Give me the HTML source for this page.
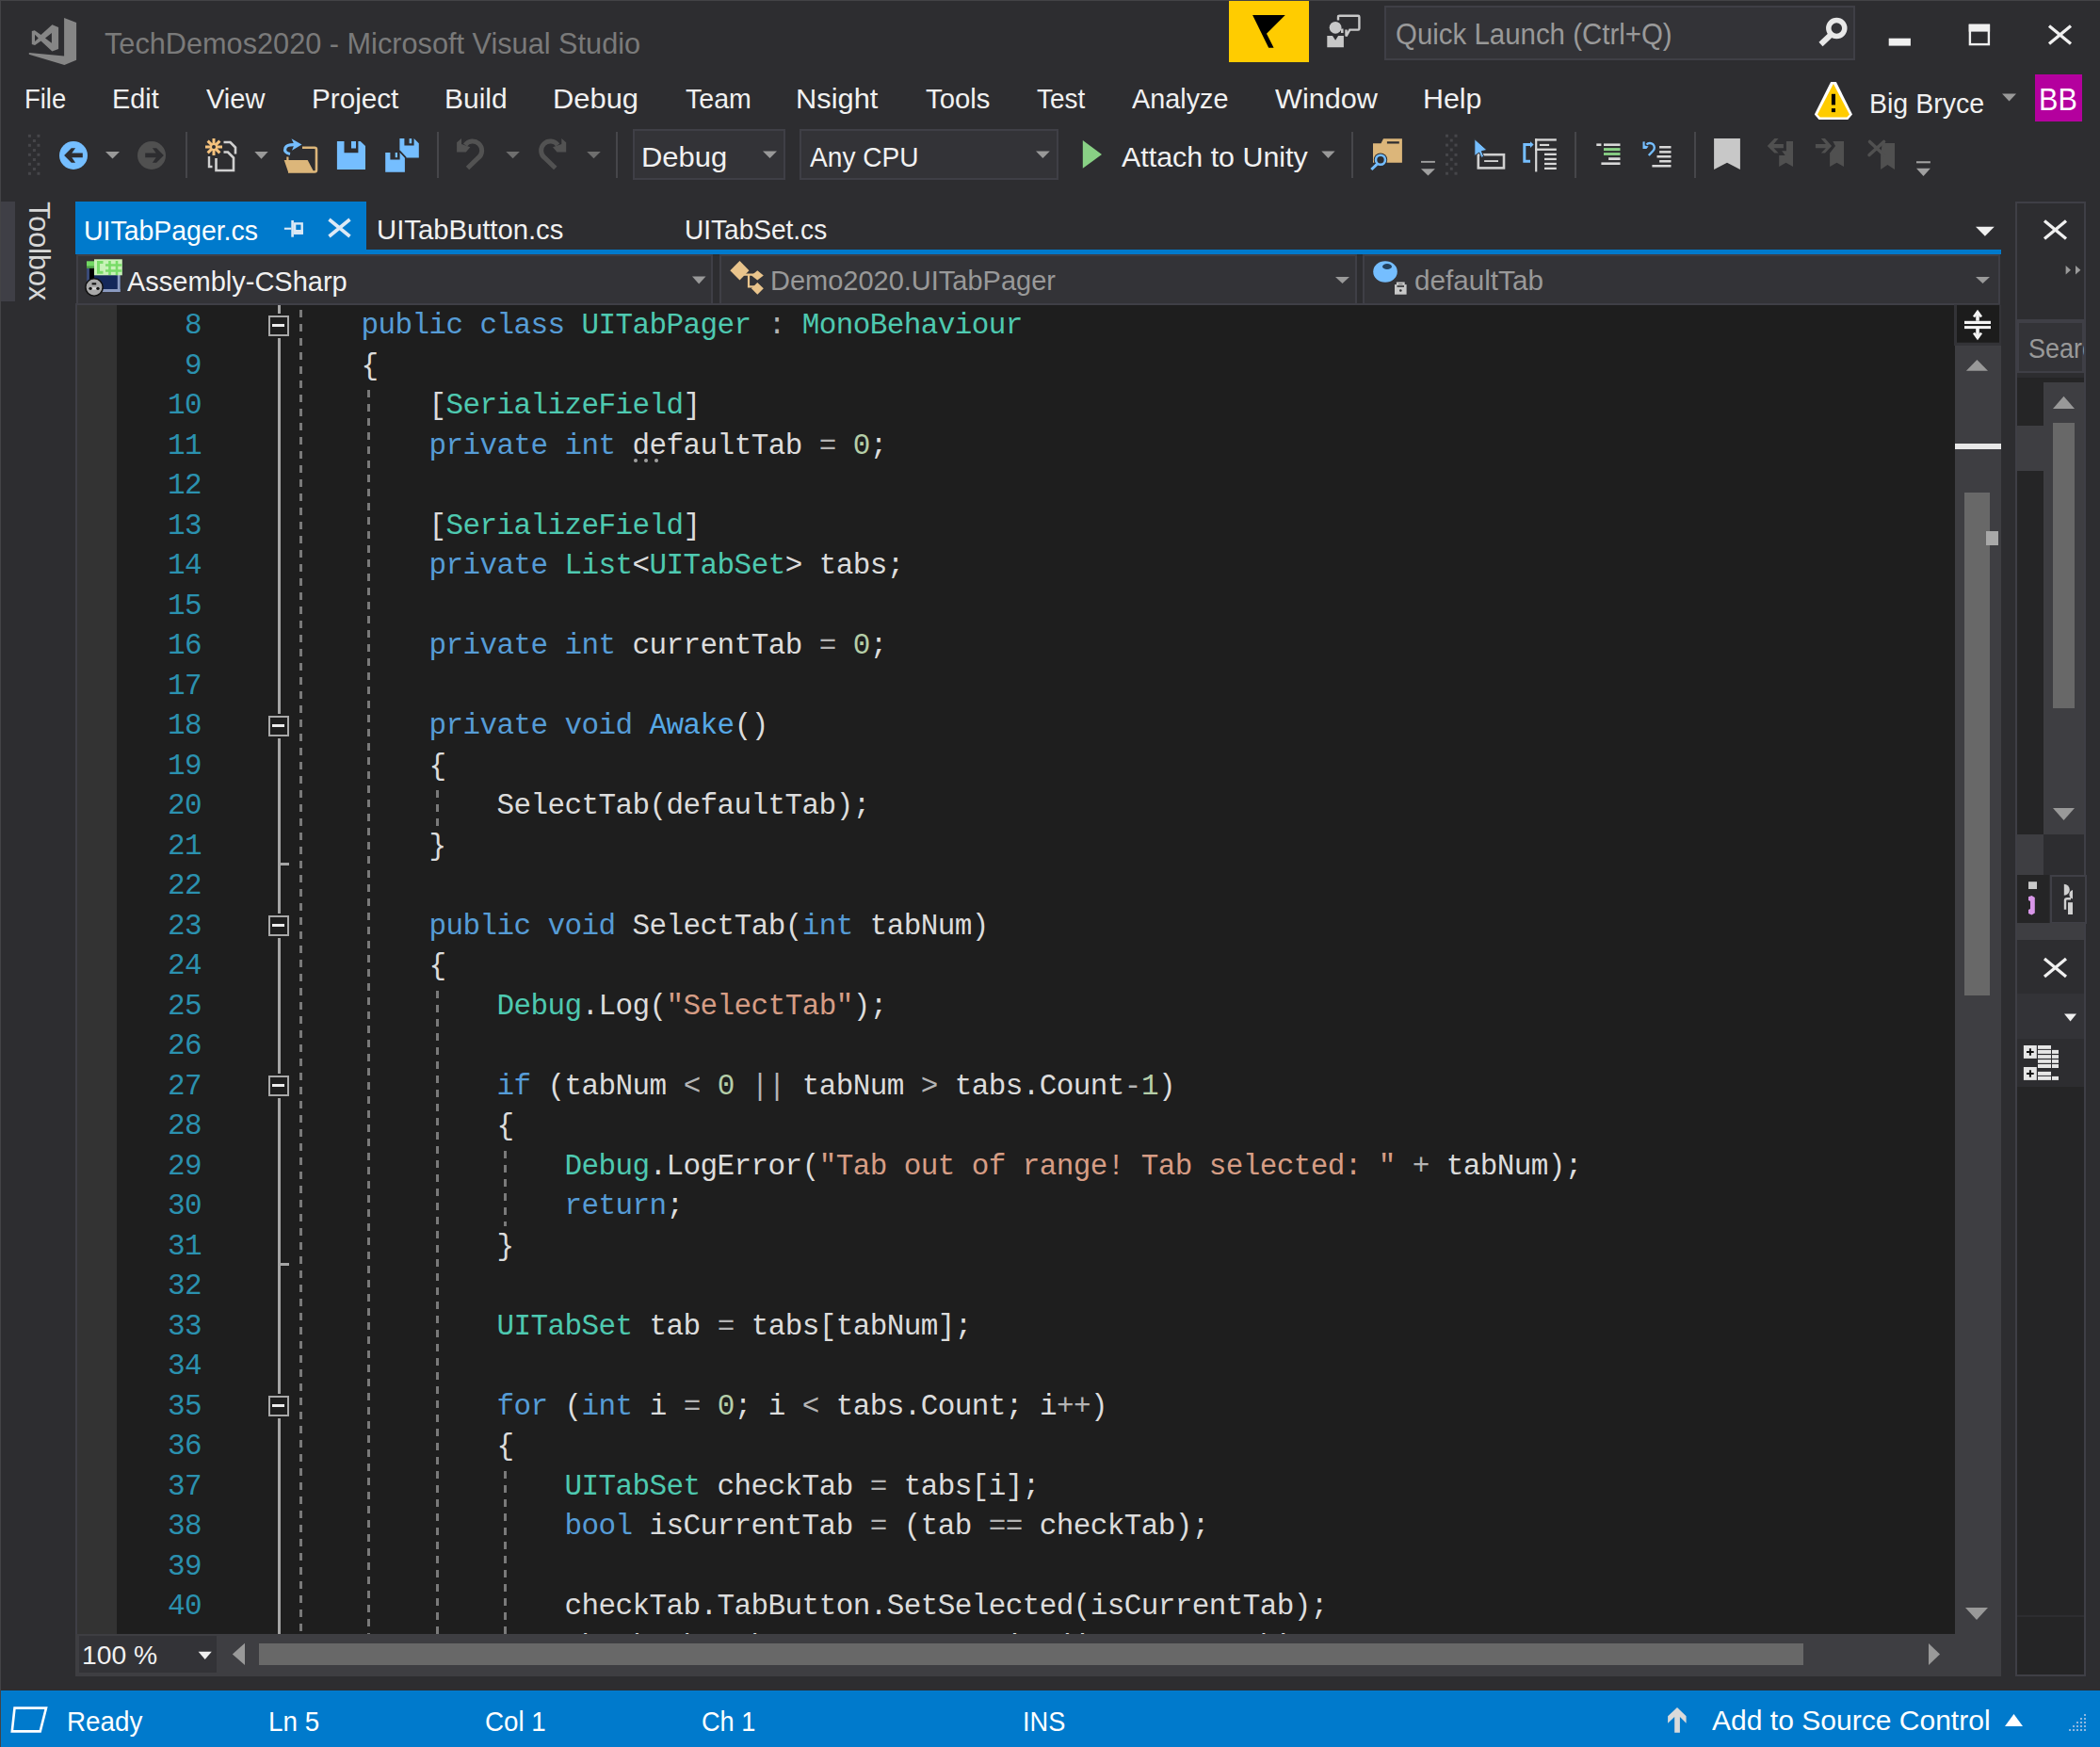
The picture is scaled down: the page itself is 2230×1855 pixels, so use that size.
<!DOCTYPE html>
<html><head><meta charset="utf-8"><style>
html,body{margin:0;padding:0;}
body{width:2230px;height:1855px;background:#2d2d30;position:relative;overflow:hidden;font-family:"Liberation Sans",sans-serif;}
.t{position:absolute;white-space:pre;transform-origin:0 0;font-family:"Liberation Sans",sans-serif;}
.c{position:absolute;white-space:pre;font-family:"Liberation Mono",monospace;font-size:31px;line-height:31px;letter-spacing:-0.6px;}
</style></head><body>
<div style="position:absolute;left:0px;top:0px;width:2230px;height:1px;background:#434346;"></div><div style="position:absolute;left:0px;top:0px;width:1px;height:1855px;background:#434346;"></div><div style="position:absolute;left:1305px;top:1px;width:85px;height:65px;background:#ffcc00;"></div><div style="position:absolute;left:1470px;top:6px;width:496px;height:54px;background:#333337;border:2px solid #3f3f46;"></div><div style="position:absolute;left:2161px;top:79px;width:50px;height:50px;background:#b4009e;"></div><div style="position:absolute;left:672px;top:137px;width:158px;height:50px;background:#333337;border:2px solid #3f3f46;"></div><div style="position:absolute;left:849px;top:137px;width:271px;height:50px;background:#333337;border:2px solid #3f3f46;"></div><div style="position:absolute;left:197px;top:140px;width:2px;height:49px;background:#46464a;"></div><div style="position:absolute;left:464px;top:140px;width:2px;height:49px;background:#46464a;"></div><div style="position:absolute;left:654px;top:140px;width:2px;height:49px;background:#46464a;"></div><div style="position:absolute;left:1435px;top:140px;width:2px;height:49px;background:#46464a;"></div><div style="position:absolute;left:1672px;top:140px;width:2px;height:49px;background:#46464a;"></div><div style="position:absolute;left:1799px;top:140px;width:2px;height:49px;background:#46464a;"></div><div style="position:absolute;left:1px;top:214px;width:15px;height:106px;background:#3f3f46;"></div><div style="position:absolute;left:80px;top:214px;width:309px;height:56px;background:#007acc;"></div><div style="position:absolute;left:80px;top:265px;width:2045px;height:5px;background:#007acc;"></div><div style="position:absolute;left:81px;top:270px;width:672px;height:50px;background:#333337;border:2px solid #3f3f46;"></div><div style="position:absolute;left:764px;top:270px;width:673px;height:50px;background:#333337;border:2px solid #3f3f46;"></div><div style="position:absolute;left:1447px;top:270px;width:673px;height:50px;background:#333337;border:2px solid #3f3f46;"></div><div style="position:absolute;left:80px;top:322px;width:1996px;height:1413px;background:#3f3f46;"></div><div style="position:absolute;left:82px;top:324px;width:1994px;height:1411px;background:#1e1e1e;"></div><div style="position:absolute;left:82px;top:324px;width:42px;height:1411px;background:#333333;"></div><div style="position:absolute;left:2076px;top:324px;width:49px;height:1411px;background:#3e3e42;"></div><div style="position:absolute;left:2076px;top:324px;width:48px;height:40px;background:#1e1e1e;"></div><div style="position:absolute;left:2076px;top:471px;width:49px;height:6px;background:#e8e8e8;"></div><div style="position:absolute;left:2086px;top:523px;width:27px;height:534px;background:#686868;"></div><div style="position:absolute;left:2109px;top:564px;width:13px;height:15px;background:#a8a8a8;"></div><div style="position:absolute;left:80px;top:1735px;width:2045px;height:45px;background:#3e3e42;"></div><div style="position:absolute;left:84px;top:1737px;width:146px;height:39px;background:#333337;"></div><div style="position:absolute;left:275px;top:1745px;width:1640px;height:23px;background:#686868;"></div><div style="position:absolute;left:1px;top:1795px;width:2229px;height:60px;background:#007acc;"></div><div style="position:absolute;left:2140px;top:214px;width:71px;height:1562px;background:#2d2d30;border:2px solid #3f3f46;"></div><div style="position:absolute;left:2142px;top:339px;width:71px;height:3px;background:#3f3f46;"></div><div style="position:absolute;left:2142px;top:341px;width:67px;height:51px;background:#333337;border:2px solid #3f3f46;"></div><div style="position:absolute;left:2142px;top:401px;width:71px;height:5px;background:#252526;"></div><div style="position:absolute;left:2142px;top:406px;width:28px;height:46px;background:#252526;"></div><div style="position:absolute;left:2142px;top:452px;width:28px;height:48px;background:#3e3e42;"></div><div style="position:absolute;left:2142px;top:500px;width:28px;height:386px;background:#252526;"></div><div style="position:absolute;left:2170px;top:406px;width:43px;height:480px;background:#3e3e42;"></div><div style="position:absolute;left:2180px;top:449px;width:23px;height:303px;background:#686868;"></div><div style="position:absolute;left:2142px;top:886px;width:28px;height:43px;background:#3e3e42;"></div><div style="position:absolute;left:2142px;top:929px;width:34px;height:51px;background:#252526;"></div><div style="position:absolute;left:2177px;top:929px;width:35px;height:48px;background:#2d2d30;border:2px solid #3f3f46;"></div><div style="position:absolute;left:2142px;top:980px;width:71px;height:18px;background:#3e3e42;"></div><div style="position:absolute;left:2142px;top:1055px;width:71px;height:48px;background:#333337;"></div><div style="position:absolute;left:2142px;top:1154px;width:71px;height:624px;background:#252526;"></div><div style="position:absolute;left:2142px;top:1715px;width:71px;height:2px;background:#2d2d30;"></div><div style="position:absolute;left:124px;top:324px;width:1952px;height:1411px;overflow:hidden"><div style="position:absolute;left:194.0px;top:0.0px;width:3px;height:1445.0px;background:repeating-linear-gradient(to bottom,transparent 0px,transparent 4.9px,#7a7a7a 4.9px,#7a7a7a 12.6px,transparent 12.6px,transparent 15px)"></div><div style="position:absolute;left:266.0px;top:85.0px;width:3px;height:1360.0px;background:repeating-linear-gradient(to bottom,transparent 0px,transparent 4.9px,#7a7a7a 4.9px,#7a7a7a 12.6px,transparent 12.6px,transparent 15px)"></div><div style="position:absolute;left:339.0px;top:510.0px;width:3px;height:42.5px;background:repeating-linear-gradient(to bottom,transparent 0px,transparent 4.9px,#7a7a7a 4.9px,#7a7a7a 12.6px,transparent 12.6px,transparent 15px)"></div><div style="position:absolute;left:339.0px;top:722.5px;width:3px;height:722.5px;background:repeating-linear-gradient(to bottom,transparent 0px,transparent 4.9px,#7a7a7a 4.9px,#7a7a7a 12.6px,transparent 12.6px,transparent 15px)"></div><div style="position:absolute;left:411.0px;top:892.5px;width:3px;height:85.0px;background:repeating-linear-gradient(to bottom,transparent 0px,transparent 4.9px,#7a7a7a 4.9px,#7a7a7a 12.6px,transparent 12.6px,transparent 15px)"></div><div style="position:absolute;left:411.0px;top:1232.5px;width:3px;height:212.5px;background:repeating-linear-gradient(to bottom,transparent 0px,transparent 4.9px,#7a7a7a 4.9px,#7a7a7a 12.6px,transparent 12.6px,transparent 15px)"></div><div style="position:absolute;left:171px;top:0px;width:3px;height:1411px;background:#a5a5a5"></div><div style="position:absolute;left:174px;top:592.0px;width:9px;height:3px;background:#a5a5a5"></div><div style="position:absolute;left:174px;top:1017.0px;width:9px;height:3px;background:#a5a5a5"></div><div style="position:absolute;left:161px;top:10.50px;width:18px;height:18px;border:2px solid #a8a8a8;background:#1e1e1e;box-shadow:0 0 0 2px #1e1e1e"><div style="position:absolute;left:2.3px;top:7.4px;width:12.8px;height:2.8px;background:#ececec"></div></div><div style="position:absolute;left:161px;top:435.50px;width:18px;height:18px;border:2px solid #a8a8a8;background:#1e1e1e;box-shadow:0 0 0 2px #1e1e1e"><div style="position:absolute;left:2.3px;top:7.4px;width:12.8px;height:2.8px;background:#ececec"></div></div><div style="position:absolute;left:161px;top:648.00px;width:18px;height:18px;border:2px solid #a8a8a8;background:#1e1e1e;box-shadow:0 0 0 2px #1e1e1e"><div style="position:absolute;left:2.3px;top:7.4px;width:12.8px;height:2.8px;background:#ececec"></div></div><div style="position:absolute;left:161px;top:818.00px;width:18px;height:18px;border:2px solid #a8a8a8;background:#1e1e1e;box-shadow:0 0 0 2px #1e1e1e"><div style="position:absolute;left:2.3px;top:7.4px;width:12.8px;height:2.8px;background:#ececec"></div></div><div style="position:absolute;left:161px;top:1158.00px;width:18px;height:18px;border:2px solid #a8a8a8;background:#1e1e1e;box-shadow:0 0 0 2px #1e1e1e"><div style="position:absolute;left:2.3px;top:7.4px;width:12.8px;height:2.8px;background:#ececec"></div></div><div class="c" style="left:72.0px;top:6.13px;color:#2b91af">8</div><div class="c" style="left:187.5px;top:6.13px;color:#dcdcdc">    <span style="color:#569cd6">public</span> <span style="color:#569cd6">class</span> <span style="color:#4ec9b0">UITabPager</span> <span style="color:#b4b4b4">:</span> <span style="color:#4ec9b0">MonoBehaviour</span></div><div class="c" style="left:72.0px;top:48.63px;color:#2b91af">9</div><div class="c" style="left:187.5px;top:48.63px;color:#dcdcdc">    <span style="color:#dcdcdc">{</span></div><div class="c" style="left:54.0px;top:91.13px;color:#2b91af">10</div><div class="c" style="left:187.5px;top:91.13px;color:#dcdcdc">        <span style="color:#dcdcdc">[</span><span style="color:#4ec9b0">SerializeField</span><span style="color:#dcdcdc">]</span></div><div class="c" style="left:54.0px;top:133.63px;color:#2b91af">11</div><div class="c" style="left:187.5px;top:133.63px;color:#dcdcdc">        <span style="color:#569cd6">private</span> <span style="color:#569cd6">int</span> <span style="color:#dcdcdc">defaultTab</span> <span style="color:#b4b4b4">=</span> <span style="color:#b5cea8">0</span><span style="color:#dcdcdc">;</span></div><div class="c" style="left:54.0px;top:176.13px;color:#2b91af">12</div><div class="c" style="left:187.5px;top:176.13px;color:#dcdcdc"></div><div class="c" style="left:54.0px;top:218.63px;color:#2b91af">13</div><div class="c" style="left:187.5px;top:218.63px;color:#dcdcdc">        <span style="color:#dcdcdc">[</span><span style="color:#4ec9b0">SerializeField</span><span style="color:#dcdcdc">]</span></div><div class="c" style="left:54.0px;top:261.13px;color:#2b91af">14</div><div class="c" style="left:187.5px;top:261.13px;color:#dcdcdc">        <span style="color:#569cd6">private</span> <span style="color:#4ec9b0">List</span><span style="color:#dcdcdc">&lt;</span><span style="color:#4ec9b0">UITabSet</span><span style="color:#dcdcdc">&gt;</span> <span style="color:#dcdcdc">tabs</span><span style="color:#dcdcdc">;</span></div><div class="c" style="left:54.0px;top:303.63px;color:#2b91af">15</div><div class="c" style="left:187.5px;top:303.63px;color:#dcdcdc"></div><div class="c" style="left:54.0px;top:346.13px;color:#2b91af">16</div><div class="c" style="left:187.5px;top:346.13px;color:#dcdcdc">        <span style="color:#569cd6">private</span> <span style="color:#569cd6">int</span> <span style="color:#dcdcdc">currentTab</span> <span style="color:#b4b4b4">=</span> <span style="color:#b5cea8">0</span><span style="color:#dcdcdc">;</span></div><div class="c" style="left:54.0px;top:388.63px;color:#2b91af">17</div><div class="c" style="left:187.5px;top:388.63px;color:#dcdcdc"></div><div class="c" style="left:54.0px;top:431.13px;color:#2b91af">18</div><div class="c" style="left:187.5px;top:431.13px;color:#dcdcdc">        <span style="color:#569cd6">private</span> <span style="color:#569cd6">void</span> <span style="color:#56a8e6">Awake</span><span style="color:#dcdcdc">(</span><span style="color:#dcdcdc">)</span></div><div class="c" style="left:54.0px;top:473.63px;color:#2b91af">19</div><div class="c" style="left:187.5px;top:473.63px;color:#dcdcdc">        <span style="color:#dcdcdc">{</span></div><div class="c" style="left:54.0px;top:516.13px;color:#2b91af">20</div><div class="c" style="left:187.5px;top:516.13px;color:#dcdcdc">            <span style="color:#dcdcdc">SelectTab</span><span style="color:#dcdcdc">(</span><span style="color:#dcdcdc">defaultTab</span><span style="color:#dcdcdc">)</span><span style="color:#dcdcdc">;</span></div><div class="c" style="left:54.0px;top:558.63px;color:#2b91af">21</div><div class="c" style="left:187.5px;top:558.63px;color:#dcdcdc">        <span style="color:#dcdcdc">}</span></div><div class="c" style="left:54.0px;top:601.13px;color:#2b91af">22</div><div class="c" style="left:187.5px;top:601.13px;color:#dcdcdc"></div><div class="c" style="left:54.0px;top:643.63px;color:#2b91af">23</div><div class="c" style="left:187.5px;top:643.63px;color:#dcdcdc">        <span style="color:#569cd6">public</span> <span style="color:#569cd6">void</span> <span style="color:#dcdcdc">SelectTab</span><span style="color:#dcdcdc">(</span><span style="color:#569cd6">int</span> <span style="color:#dcdcdc">tabNum</span><span style="color:#dcdcdc">)</span></div><div class="c" style="left:54.0px;top:686.13px;color:#2b91af">24</div><div class="c" style="left:187.5px;top:686.13px;color:#dcdcdc">        <span style="color:#dcdcdc">{</span></div><div class="c" style="left:54.0px;top:728.63px;color:#2b91af">25</div><div class="c" style="left:187.5px;top:728.63px;color:#dcdcdc">            <span style="color:#4ec9b0">Debug</span><span style="color:#dcdcdc">.</span><span style="color:#dcdcdc">Log</span><span style="color:#dcdcdc">(</span><span style="color:#d69d85">&quot;SelectTab&quot;</span><span style="color:#dcdcdc">)</span><span style="color:#dcdcdc">;</span></div><div class="c" style="left:54.0px;top:771.13px;color:#2b91af">26</div><div class="c" style="left:187.5px;top:771.13px;color:#dcdcdc"></div><div class="c" style="left:54.0px;top:813.63px;color:#2b91af">27</div><div class="c" style="left:187.5px;top:813.63px;color:#dcdcdc">            <span style="color:#569cd6">if</span> <span style="color:#dcdcdc">(</span><span style="color:#dcdcdc">tabNum</span> <span style="color:#b4b4b4">&lt;</span> <span style="color:#b5cea8">0</span> <span style="color:#b4b4b4">||</span> <span style="color:#dcdcdc">tabNum</span> <span style="color:#b4b4b4">&gt;</span> <span style="color:#dcdcdc">tabs</span><span style="color:#dcdcdc">.</span><span style="color:#dcdcdc">Count</span><span style="color:#b4b4b4">-</span><span style="color:#b5cea8">1</span><span style="color:#dcdcdc">)</span></div><div class="c" style="left:54.0px;top:856.13px;color:#2b91af">28</div><div class="c" style="left:187.5px;top:856.13px;color:#dcdcdc">            <span style="color:#dcdcdc">{</span></div><div class="c" style="left:54.0px;top:898.63px;color:#2b91af">29</div><div class="c" style="left:187.5px;top:898.63px;color:#dcdcdc">                <span style="color:#4ec9b0">Debug</span><span style="color:#dcdcdc">.</span><span style="color:#dcdcdc">LogError</span><span style="color:#dcdcdc">(</span><span style="color:#d69d85">&quot;Tab out of range! Tab selected: &quot;</span> <span style="color:#b4b4b4">+</span> <span style="color:#dcdcdc">tabNum</span><span style="color:#dcdcdc">)</span><span style="color:#dcdcdc">;</span></div><div class="c" style="left:54.0px;top:941.13px;color:#2b91af">30</div><div class="c" style="left:187.5px;top:941.13px;color:#dcdcdc">                <span style="color:#569cd6">return</span><span style="color:#dcdcdc">;</span></div><div class="c" style="left:54.0px;top:983.63px;color:#2b91af">31</div><div class="c" style="left:187.5px;top:983.63px;color:#dcdcdc">            <span style="color:#dcdcdc">}</span></div><div class="c" style="left:54.0px;top:1026.13px;color:#2b91af">32</div><div class="c" style="left:187.5px;top:1026.13px;color:#dcdcdc"></div><div class="c" style="left:54.0px;top:1068.63px;color:#2b91af">33</div><div class="c" style="left:187.5px;top:1068.63px;color:#dcdcdc">            <span style="color:#4ec9b0">UITabSet</span> <span style="color:#dcdcdc">tab</span> <span style="color:#b4b4b4">=</span> <span style="color:#dcdcdc">tabs</span><span style="color:#dcdcdc">[</span><span style="color:#dcdcdc">tabNum</span><span style="color:#dcdcdc">]</span><span style="color:#dcdcdc">;</span></div><div class="c" style="left:54.0px;top:1111.13px;color:#2b91af">34</div><div class="c" style="left:187.5px;top:1111.13px;color:#dcdcdc"></div><div class="c" style="left:54.0px;top:1153.63px;color:#2b91af">35</div><div class="c" style="left:187.5px;top:1153.63px;color:#dcdcdc">            <span style="color:#569cd6">for</span> <span style="color:#dcdcdc">(</span><span style="color:#569cd6">int</span> <span style="color:#dcdcdc">i</span> <span style="color:#b4b4b4">=</span> <span style="color:#b5cea8">0</span><span style="color:#dcdcdc">;</span> <span style="color:#dcdcdc">i</span> <span style="color:#b4b4b4">&lt;</span> <span style="color:#dcdcdc">tabs</span><span style="color:#dcdcdc">.</span><span style="color:#dcdcdc">Count</span><span style="color:#dcdcdc">;</span> <span style="color:#dcdcdc">i</span><span style="color:#b4b4b4">++</span><span style="color:#dcdcdc">)</span></div><div class="c" style="left:54.0px;top:1196.13px;color:#2b91af">36</div><div class="c" style="left:187.5px;top:1196.13px;color:#dcdcdc">            <span style="color:#dcdcdc">{</span></div><div class="c" style="left:54.0px;top:1238.63px;color:#2b91af">37</div><div class="c" style="left:187.5px;top:1238.63px;color:#dcdcdc">                <span style="color:#4ec9b0">UITabSet</span> <span style="color:#dcdcdc">checkTab</span> <span style="color:#b4b4b4">=</span> <span style="color:#dcdcdc">tabs</span><span style="color:#dcdcdc">[</span><span style="color:#dcdcdc">i</span><span style="color:#dcdcdc">]</span><span style="color:#dcdcdc">;</span></div><div class="c" style="left:54.0px;top:1281.13px;color:#2b91af">38</div><div class="c" style="left:187.5px;top:1281.13px;color:#dcdcdc">                <span style="color:#569cd6">bool</span> <span style="color:#dcdcdc">isCurrentTab</span> <span style="color:#b4b4b4">=</span> <span style="color:#dcdcdc">(</span><span style="color:#dcdcdc">tab</span> <span style="color:#b4b4b4">==</span> <span style="color:#dcdcdc">checkTab</span><span style="color:#dcdcdc">)</span><span style="color:#dcdcdc">;</span></div><div class="c" style="left:54.0px;top:1323.63px;color:#2b91af">39</div><div class="c" style="left:187.5px;top:1323.63px;color:#dcdcdc"></div><div class="c" style="left:54.0px;top:1366.13px;color:#2b91af">40</div><div class="c" style="left:187.5px;top:1366.13px;color:#dcdcdc">                <span style="color:#dcdcdc">checkTab</span><span style="color:#dcdcdc">.</span><span style="color:#dcdcdc">TabButton</span><span style="color:#dcdcdc">.</span><span style="color:#dcdcdc">SetSelected</span><span style="color:#dcdcdc">(</span><span style="color:#dcdcdc">isCurrentTab</span><span style="color:#dcdcdc">)</span><span style="color:#dcdcdc">;</span></div><div class="c" style="left:187.5px;top:1408.63px;color:#dcdcdc">                <span style="color:#dcdcdc">checkTab</span><span style="color:#dcdcdc">.</span><span style="color:#dcdcdc">TabContent</span><span style="color:#dcdcdc">.</span><span style="color:#dcdcdc">SetActive</span><span style="color:#dcdcdc">(</span><span style="color:#dcdcdc">isCurrentTab</span><span style="color:#dcdcdc">)</span><span style="color:#dcdcdc">;</span></div><div style="position:absolute;left:549.2px;top:163.3px;width:4px;height:4px;border-radius:2px;background:#a0a0a0"></div><div style="position:absolute;left:560.3px;top:163.3px;width:4px;height:4px;border-radius:2px;background:#a0a0a0"></div><div style="position:absolute;left:571.4px;top:163.3px;width:4px;height:4px;border-radius:2px;background:#a0a0a0"></div></div><svg style="position:absolute;left:0;top:0" width="2230" height="1855" viewBox="0 0 2230 1855"><polygon points="68.1,18.9 81.1,24.1 81.1,63.8 68.4,69.1 30.8,57.8 30.8,56.0 68.1,59.6" fill="#868686" /><path fill="#868686" fill-rule="evenodd" d="M33.8,33 L36.8,32.3 L43.5,37 L55.4,26.2 L62.1,28.9 L62.1,51.9 L55.4,54.5 L43.5,43.5 L37,48.1 L33.8,47.1 Z M37,36.8 L40.8,40.4 L37,44 Z M54.9,35.1 L54.9,45.7 L48,40.4 Z"/><polygon points="1330.1,16.0 1364.8,16.0 1345.0,35.8 1352.6,50.7 1347.2,50.7" fill="#000000" /><circle cx="1418.1" cy="29.3" r="6.4" fill="#c8c8c8"/><polygon points="1409.3,38.1 1415.0,38.1 1418.1,42.7 1421.1,38.1 1426.9,38.1 1426.9,50.3 1409.3,50.3" fill="#c8c8c8" /><path d="M1421,21.5 V18 Q1421,16.8 1422.5,16.8 H1442.2 Q1443.4,16.8 1443.4,18 V30.3 Q1443.4,31.6 1442.2,31.6 H1433.3 L1429.5,38.5 L1429.5,31.6" fill="none" stroke="#c8c8c8" stroke-width="2.4"/><rect x="1424" y="30.5" width="2.50" height="4.50" fill="#c8c8c8"/><circle cx="1950.3" cy="30" r="8.5" fill="none" stroke="#e8e8e8" stroke-width="5.5"/><line x1="1944.6" y1="36.5" x2="1933.5" y2="47" stroke="#e8e8e8" stroke-width="6"/><rect x="2005.7" y="40.7" width="23.20" height="7.90" fill="#f0f0f0"/><rect x="2091.9" y="26.9" width="20" height="20.2" fill="none" stroke="#f0f0f0" stroke-width="2.4"/><rect x="2090.7" y="25.7" width="22.40" height="7.90" fill="#f0f0f0"/><path d="M2176,27.5 L2199,46.5 M2199,27.5 L2176,46.5" stroke="#f0f0f0" stroke-width="3.3"/><polygon points="1944.1,87.0 1949.9,87.0 1967.0,121.5 1962.3,127.0 1931.5,127.0 1926.8,121.5" fill="#ffffff" /><polygon points="1946.9,88.9 1964.0,121.4 1961.2,124.5 1932.8,124.5 1930.0,121.4" fill="#ffcc00" /><rect x="1944.9" y="99.8" width="4.10" height="11.60" fill="#000000"/><rect x="1944.9" y="115.1" width="4.10" height="4.00" fill="#000000"/><polygon points="2126.0,99.5 2141.0,99.5 2133.5,107.4" fill="#999999" /><rect x="29.9" y="142.8" width="3.00" height="3.00" fill="#46464a"/><rect x="29.9" y="152.8" width="3.00" height="3.00" fill="#46464a"/><rect x="29.9" y="162.8" width="3.00" height="3.00" fill="#46464a"/><rect x="29.9" y="172.8" width="3.00" height="3.00" fill="#46464a"/><rect x="29.9" y="182.8" width="3.00" height="3.00" fill="#46464a"/><rect x="34.9" y="148.0" width="3.00" height="3.00" fill="#46464a"/><rect x="34.9" y="158.0" width="3.00" height="3.00" fill="#46464a"/><rect x="34.9" y="168.0" width="3.00" height="3.00" fill="#46464a"/><rect x="34.9" y="178.0" width="3.00" height="3.00" fill="#46464a"/><rect x="39.4" y="142.8" width="3.00" height="3.00" fill="#46464a"/><rect x="39.4" y="152.8" width="3.00" height="3.00" fill="#46464a"/><rect x="39.4" y="162.8" width="3.00" height="3.00" fill="#46464a"/><rect x="39.4" y="172.8" width="3.00" height="3.00" fill="#46464a"/><rect x="39.4" y="182.8" width="3.00" height="3.00" fill="#46464a"/><circle cx="78" cy="165" r="15" fill="#75beff"/><polygon points="68.1,165.0 75.8,157.3 80.1,157.3 76.3,162.5 87.8,162.5 87.8,167.2 76.3,167.2 80.1,172.8 75.8,172.8" fill="#2d2d30" /><polygon points="112.0,161.0 127.0,161.0 119.5,168.6" fill="#999999" /><circle cx="161" cy="165" r="15" fill="#505050"/><polygon points="173.9,165.0 166.2,157.3 161.9,157.3 165.7,162.5 154.2,162.5 154.2,167.2 165.7,167.2 161.9,172.8 166.2,172.8" fill="#2d2d30" /><path d="M227,147 V165 M218,156 H236 M220.6,149.6 L233.4,162.4 M233.4,149.6 L220.6,162.4" stroke="#f5c27d" stroke-width="3"/><circle cx="227" cy="156" r="2" fill="#2d2d30"/><path d="M237.5,151 H244.5 L250,156.5 V163.5" fill="none" stroke="#d0d0d0" stroke-width="2.6"/><path d="M237.5,161.5 H242 L248,167.5 V181 H229.5 V168" fill="none" stroke="#d0d0d0" stroke-width="2.6"/><path d="M222,166 V177 H225.5" fill="none" stroke="#d0d0d0" stroke-width="2.4"/><polygon points="270.3,161.0 284.7,161.0 277.5,168.7" fill="#999999" /><path d="M321,156.8 H334 Q336,156.8 336,158.8 V180.6 Q336,182.5 334,182.5 H306" fill="none" stroke="#dcb67a" stroke-width="2.6"/><polygon points="301.7,170.0 326.7,170.0 333.3,182.6 306.0,182.6" fill="#dcb67a" /><rect x="304.3" y="166.5" width="2.20" height="3.50" fill="#dcb67a"/><path d="M308,163.5 Q301,162 303,157 Q305,153.2 314,153.8" fill="none" stroke="#75beff" stroke-width="3.2"/><polygon points="309.5,147.2 320.5,153.5 310.0,159.8 312.5,153.5" fill="#75beff" /><path fill="#75beff" fill-rule="evenodd" d="M357.9,150 H382.7 L388,154.9 V180.1 H357.9 Z M365.5,150 V162.3 H380.4 V150 Z"/><rect x="373" y="150" width="5.00" height="7.50" fill="#75beff"/><path fill="#75beff" fill-rule="evenodd" d="M424.4,147.1 H439.6 L444.8,152.3 V167.5 H431.7 L424.4,159.9 Z M429.4,147.1 V154.4 H439.6 V147.1 Z"/><rect x="434.6" y="147.1" width="2.60" height="5.20" fill="#75beff"/><path fill="#75beff" fill-rule="evenodd" d="M409.2,162 H424.9 L429.9,167.5 V182.7 H409.2 Z M414.4,162 V169.6 H424.6 V162 Z"/><rect x="419.7" y="162" width="2.30" height="5.20" fill="#75beff"/><line x1="424" y1="160" x2="431" y2="167.5" stroke="#2d2d30" stroke-width="1.8"/><path d="M496.5,178.5 L508,167.5 A9.8,9.8 0 1 0 494,154" fill="none" stroke="#525252" stroke-width="5"/><polygon points="485.1,151.3 490.0,146.9 490.0,153.0 499.3,156.2 494.8,161.5 485.1,161.5" fill="#525252" /><g transform="translate(1086.3,0) scale(-1,1)"><path d="M496.5,178.5 L508,167.5 A9.8,9.8 0 1 0 494,154" fill="none" stroke="#525252" stroke-width="5"/><polygon points="485.1,151.3 490.0,146.9 490.0,153.0 499.3,156.2 494.8,161.5 485.1,161.5" fill="#525252" /></g><polygon points="537.3,161.0 551.9,161.0 544.6,168.3" fill="#6e6e6e" /><polygon points="623.2,161.0 637.8,161.0 630.5,168.3" fill="#6e6e6e" /><polygon points="810.0,160.5 825.0,160.5 817.5,168.0" fill="#999999" /><polygon points="1100.0,160.5 1114.8,160.5 1107.4,168.0" fill="#999999" /><polygon points="1149.8,149.0 1170.0,163.9 1149.8,178.8" fill="#89d185" /><polygon points="1403.3,160.5 1417.6,160.5 1410.4,168.0" fill="#999999" /><path fill="#dcb67a" fill-rule="evenodd" d="M1458,152.2 H1466.5 L1469,147.2 H1488.9 V172.8 H1458 Z M1472.9,150.3 V152.6 H1485.8 V150.3 Z"/><circle cx="1466" cy="169.7" r="7.2" fill="#2d2d30"/><circle cx="1466" cy="169.7" r="5" fill="none" stroke="#75beff" stroke-width="2.6"/><line x1="1462.2" y1="174.3" x2="1456.3" y2="180" stroke="#75beff" stroke-width="3"/><rect x="1509" y="170.9" width="14.90" height="1.90" fill="#a0a0a0"/><polygon points="1509.0,179.2 1523.9,179.2 1516.5,186.5" fill="#a0a0a0" /><rect x="1535.0" y="142.7" width="3.00" height="3.00" fill="#46464a"/><rect x="1535.0" y="152.6" width="3.00" height="3.00" fill="#46464a"/><rect x="1535.0" y="162.9" width="3.00" height="3.00" fill="#46464a"/><rect x="1535.0" y="172.8" width="3.00" height="3.00" fill="#46464a"/><rect x="1535.0" y="182.7" width="3.00" height="3.00" fill="#46464a"/><rect x="1539.8" y="147.6" width="3.00" height="3.00" fill="#46464a"/><rect x="1539.8" y="157.5" width="3.00" height="3.00" fill="#46464a"/><rect x="1539.8" y="167.8" width="3.00" height="3.00" fill="#46464a"/><rect x="1539.8" y="177.7" width="3.00" height="3.00" fill="#46464a"/><rect x="1544.5" y="142.7" width="3.00" height="3.00" fill="#46464a"/><rect x="1544.5" y="152.6" width="3.00" height="3.00" fill="#46464a"/><rect x="1544.5" y="162.9" width="3.00" height="3.00" fill="#46464a"/><rect x="1544.5" y="172.8" width="3.00" height="3.00" fill="#46464a"/><rect x="1544.5" y="182.7" width="3.00" height="3.00" fill="#46464a"/><rect x="1569.8" y="164.2" width="27.2" height="14.2" fill="none" stroke="#d0d0d0" stroke-width="2.6"/><rect x="1576.1" y="170.1" width="14.90" height="1.90" fill="#d0d0d0"/><polygon points="1565.8,147.6 1579.1,159.4 1573.4,160.6 1575.7,166.3 1573.0,167.4 1570.8,162.1 1565.8,165.5" fill="#75beff" stroke="#2d2d30" stroke-width="1"/><path d="M1626.5,153.5 H1618.8 V171.3 H1625" fill="none" stroke="#75beff" stroke-width="3"/><polygon points="1625.0,150.3 1628.6,153.5 1625.0,157.0" fill="#75beff" /><rect x="1630.1" y="147.3" width="2.20" height="35.10" fill="#d8d8d8"/><rect x="1630" y="147.3" width="22.80" height="2.30" fill="#d8d8d8"/><rect x="1630" y="157.6" width="22.80" height="2.30" fill="#d8d8d8"/><rect x="1640" y="162.7" width="12.80" height="2.30" fill="#d8d8d8"/><rect x="1640" y="167.8" width="12.80" height="2.30" fill="#d8d8d8"/><rect x="1640" y="172.8" width="12.80" height="2.30" fill="#d8d8d8"/><rect x="1640" y="177.7" width="12.80" height="2.30" fill="#d8d8d8"/><rect x="1634.9" y="152.9" width="10.20" height="2.10" fill="#d8d8d8"/><rect x="1695.3" y="152.4" width="5.10" height="2.60" fill="#d8d8d8"/><rect x="1703" y="152.4" width="17.50" height="2.60" fill="#d8d8d8"/><rect x="1703" y="157.1" width="17.50" height="3.00" fill="#89d185"/><rect x="1703" y="162.1" width="17.50" height="2.80" fill="#89d185"/><rect x="1708.1" y="167.2" width="12.40" height="2.80" fill="#d8d8d8"/><rect x="1700.4" y="172.4" width="20.10" height="2.60" fill="#d8d8d8"/><rect x="1762.1" y="155" width="12.40" height="2.50" fill="#d8d8d8"/><rect x="1762.1" y="160.1" width="12.40" height="2.50" fill="#d8d8d8"/><rect x="1759.5" y="165" width="15.00" height="2.50" fill="#d8d8d8"/><rect x="1762.1" y="170" width="12.40" height="2.50" fill="#d8d8d8"/><rect x="1754.4" y="175" width="20.10" height="2.50" fill="#d8d8d8"/><path d="M1750.8,165 L1755.5,160 A4.6,4.6 0 1 0 1748.5,153.5" fill="none" stroke="#75beff" stroke-width="2.4"/><polygon points="1744.5,150.5 1746.6,150.3 1746.6,154.5 1750.6,155.5 1748.3,158.0 1744.5,158.0" fill="#75beff" /><polygon points="1820.1,147.1 1847.9,147.1 1847.9,179.9 1834.0,172.7 1820.1,179.9" fill="#c8c8c8" /><polygon points="1896.9,150.1 1904.0,150.1 1904.0,177.1 1896.5,172.7 1889.2,177.1 1889.2,165.0 1895.7,165.0 1892.1,160.2 1896.9,160.2" fill="#505050" /><polygon points="1876.7,154.9 1884.4,147.1 1888.6,147.1 1883.5,153.0 1893.9,153.0 1893.9,157.3 1883.5,157.3 1888.6,162.6 1884.4,162.6" fill="#505050" /><polygon points="1946.3,150.1 1958.0,150.1 1958.0,177.1 1950.5,172.7 1943.1,177.1 1943.1,162.6 1949.0,155.0" fill="#505050" /><polygon points="1945.1,154.9 1938.0,147.1 1933.8,147.1 1938.9,153.0 1927.9,153.0 1927.9,157.3 1938.9,157.3 1933.8,162.6 1938.0,162.6" fill="#505050" /><polygon points="1998.7,151.9 2012.0,151.9 2012.0,179.9 2004.4,175.1 1997.1,179.9 1997.1,165.0" fill="#505050" /><path d="M1985.5,150.5 L2000.5,164.5 M2000.5,150.5 L1985,164.5" stroke="#505050" stroke-width="3.6" stroke-linecap="round"/><rect x="2035" y="171.2" width="14.90" height="2.10" fill="#a0a0a0"/><polygon points="2035.0,178.7 2049.9,178.7 2042.5,187.0" fill="#a0a0a0" /><rect x="301.9" y="241.7" width="7.60" height="2.10" fill="#dce9f5"/><rect x="309.3" y="234" width="2.60" height="17.70" fill="#dce9f5"/><rect x="313.1" y="237.4" width="7.6" height="10.2" fill="none" stroke="#dce9f5" stroke-width="2.4"/><rect x="311.9" y="244" width="10.00" height="4.80" fill="#dce9f5"/><path d="M349.5,233 L371.5,251 M371.5,233 L349.5,251" stroke="#dce9f5" stroke-width="3.6"/><polygon points="2098.0,240.7 2117.8,240.7 2107.9,250.8" fill="#f0f0f0" /><rect x="92" y="285" width="35.60" height="25.00" fill="#14285a"/><rect x="92" y="285" width="3.00" height="15.00" fill="#3a4a78"/><rect x="95" y="285" width="5.00" height="12.00" fill="#000000"/><rect x="124.8" y="290" width="2.80" height="20.00" fill="#8a9ac0"/><rect x="100" y="307" width="27.60" height="3.00" fill="#8a9ac0"/><rect x="92" y="277.3" width="8.00" height="7.70" fill="#72d862"/><rect x="92" y="282.5" width="8.00" height="2.50" fill="#4f9a48"/><rect x="100" y="275.3" width="29.80" height="17.00" fill="#c8f2b8"/><path d="M109.5,278.5 H104.5 V289.2 H109.5" fill="none" stroke="#78dc68" stroke-width="3"/><path d="M116.5,277 V292 M124,277 V292 M112,281.5 H129.5 M112,287.5 H129.5" fill="none" stroke="#78dc68" stroke-width="2.6"/><circle cx="100" cy="305" r="9.2" fill="#a8a8a8" stroke="#111" stroke-width="1.6"/><rect x="97.6" y="300.3" width="4.60" height="2.10" fill="#111111"/><circle cx="96" cy="306.3" r="1.6" fill="#111"/><circle cx="104" cy="306.3" r="1.6" fill="#111"/><rect x="98" y="305.2" width="4.00" height="2.30" fill="#d8d8d8"/><polygon points="735.0,293.6 749.5,293.6 742.2,301.4" fill="#999999" /><polygon points="785.5,277.1 795.5,287.3 785.5,297.5 775.3,287.3" fill="#e9c48c" /><polygon points="804.3,287.3 810.8,292.4 804.3,297.5 797.9,292.4" fill="#e9c48c" /><polygon points="804.3,299.9 810.8,306.2 804.3,312.8 797.9,306.2" fill="#e9c48c" /><path d="M788,291.7 H802 M795,291.7 V304.3 H802" fill="none" stroke="#e9c48c" stroke-width="2.2"/><polygon points="1418.0,294.0 1433.0,294.0 1425.5,301.0" fill="#999999" /><ellipse cx="1471" cy="288.5" rx="12.8" ry="11.2" fill="#75beff"/><ellipse cx="1473" cy="283" rx="5" ry="3" fill="#24425e"/><rect x="1481" y="302.1" width="12.60" height="10.60" fill="#c8c8c8"/><path d="M1484,302.5 V300.5 H1490.6 V302.5" fill="none" stroke="#c8c8c8" stroke-width="2.2"/><rect x="1483.5" y="303.2" width="7.50" height="1.60" fill="#2d2d30"/><circle cx="1487.3" cy="308.5" r="1.3" fill="#2d2d30"/><polygon points="2098.0,294.0 2113.0,294.0 2105.5,301.0" fill="#999999" /><rect x="2075" y="323.5" width="50.00" height="43.50" fill="#333337"/><rect x="2078" y="324" width="45.00" height="39.70" fill="#1c1c1c"/><rect x="2086" y="340.8" width="28.00" height="3.20" fill="#f4f4f4"/><rect x="2086" y="346.1" width="28.00" height="3.00" fill="#f4f4f4"/><path d="M2100,331 V340.8 M2100,349.1 V359" fill="none" stroke="#f4f4f4" stroke-width="3.6"/><path d="M2096,336.5 L2100,331 L2104,336.5 M2096,353.5 L2100,359 L2104,353.5" fill="none" stroke="#f4f4f4" stroke-width="2.6"/><polygon points="2087.9,393.8 2111.0,393.8 2099.4,382.1" fill="#999999" /><polygon points="2087.0,1707.0 2111.0,1707.0 2099.0,1720.0" fill="#999999" /><polygon points="210.6,1753.8 224.8,1753.8 217.7,1762.0" fill="#f0f0f0" /><polygon points="260.0,1744.8 260.0,1768.0 246.8,1756.4" fill="#999999" /><polygon points="2048.0,1745.0 2048.0,1768.0 2060.0,1756.5" fill="#999999" /><path d="M2171,234.5 L2194,253.5 M2194,234.5 L2171,253.5" stroke="#f0f0f0" stroke-width="3.3"/><polygon points="2193.6,282.0 2199.0,286.8 2193.6,291.6" fill="#999999" /><polygon points="2204.0,282.0 2209.4,286.8 2204.0,291.6" fill="#999999" /><polygon points="2180.0,434.0 2203.0,434.0 2191.5,420.7" fill="#999999" /><polygon points="2180.0,858.0 2203.0,858.0 2191.5,871.0" fill="#999999" /><rect x="2154" y="936.2" width="9.00" height="7.80" fill="#c8c8c8"/><polygon points="2154.0,952.2 2157.5,951.0 2160.8,953.0 2160.8,969.5 2157.5,971.4 2154.0,970.0 2154.0,966.0 2156.0,965.0 2156.0,957.0 2154.0,956.0" fill="#d896e8" /><path d="M2191.8,938.8 A6,6 0 0 1 2191.8,950.8 Z" fill="#d0d0d0"/><path d="M2201,945 A5,5 0 0 0 2201,954.6 Z" fill="#d0d0d0"/><path d="M2193,965.8 V956 Q2193,954.3 2195,954.3 H2199" fill="none" stroke="#d0d0d0" stroke-width="2.4"/><rect x="2196" y="958.2" width="5.00" height="12.80" fill="#d0d0d0"/><path d="M2171,1018 L2194,1037 M2194,1018 L2171,1037" stroke="#f0f0f0" stroke-width="3.3"/><polygon points="2192.0,1076.6 2205.0,1076.6 2198.5,1084.4" fill="#f0f0f0" /><rect x="2148.9" y="1110" width="13.90" height="13.90" fill="#e6e6e6"/><rect x="2148.9" y="1133" width="13.90" height="13.90" fill="#e6e6e6"/><path d="M2152,1117 H2159.7 M2155.9,1113.2 V1120.8 M2152,1140 H2159.7 M2155.9,1136.2 V1143.8" stroke="#111" stroke-width="2"/><rect x="2164" y="1110" width="14.00" height="3.90" fill="#e6e6e6"/><rect x="2164" y="1114.9" width="14.00" height="4.00" fill="#e6e6e6"/><rect x="2164" y="1120.1" width="14.00" height="3.80" fill="#e6e6e6"/><rect x="2164" y="1125.1" width="14.00" height="3.70" fill="#e6e6e6"/><rect x="2164" y="1130" width="14.00" height="4.00" fill="#e6e6e6"/><rect x="2164" y="1137.9" width="14.00" height="4.00" fill="#e6e6e6"/><rect x="2164" y="1142.9" width="14.00" height="4.00" fill="#e6e6e6"/><rect x="2179" y="1114.9" width="7.00" height="4.00" fill="#e6e6e6"/><rect x="2179" y="1120.1" width="7.00" height="3.80" fill="#e6e6e6"/><rect x="2179" y="1125.1" width="7.00" height="3.70" fill="#e6e6e6"/><rect x="2179" y="1130" width="7.00" height="4.00" fill="#e6e6e6"/><rect x="2179" y="1142.9" width="7.00" height="4.00" fill="#e6e6e6"/><path d="M15.5,1813.6 H49 L42.7,1838.4 H12.8 Z" fill="none" stroke="#ffffff" stroke-width="2.6"/><polygon points="1781.0,1813.0 1790.6,1822.3 1790.6,1829.7 1783.9,1823.0 1783.9,1839.8 1778.2,1839.8 1778.2,1823.0 1771.1,1829.7 1771.1,1822.3" fill="#dadada" /><polygon points="2129.0,1833.0 2148.0,1833.0 2138.5,1820.0" fill="#ffffff" /><rect x="2213" y="1820" width="2.00" height="2.00" fill="#8fb8e0"/><rect x="2209" y="1824" width="2.00" height="2.00" fill="#8fb8e0"/><rect x="2213" y="1824" width="2.00" height="2.00" fill="#8fb8e0"/><rect x="2205" y="1828" width="2.00" height="2.00" fill="#8fb8e0"/><rect x="2209" y="1828" width="2.00" height="2.00" fill="#8fb8e0"/><rect x="2213" y="1828" width="2.00" height="2.00" fill="#8fb8e0"/><rect x="2201" y="1832" width="2.00" height="2.00" fill="#8fb8e0"/><rect x="2205" y="1832" width="2.00" height="2.00" fill="#8fb8e0"/><rect x="2209" y="1832" width="2.00" height="2.00" fill="#8fb8e0"/><rect x="2213" y="1832" width="2.00" height="2.00" fill="#8fb8e0"/><rect x="2197" y="1836" width="2.00" height="2.00" fill="#8fb8e0"/><rect x="2201" y="1836" width="2.00" height="2.00" fill="#8fb8e0"/><rect x="2205" y="1836" width="2.00" height="2.00" fill="#8fb8e0"/><rect x="2209" y="1836" width="2.00" height="2.00" fill="#8fb8e0"/><rect x="2213" y="1836" width="2.00" height="2.00" fill="#8fb8e0"/></svg><div class="t" style="left:111.40px;top:30.01px;font-size:32px;line-height:32px;color:#7a7a7a;transform:scaleX(0.9589)">TechDemos2020 - Microsoft Visual Studio</div><div class="t" style="left:26.17px;top:90.11px;font-size:30px;line-height:30px;color:#f1f1f1;transform:scaleX(0.9130)">File</div><div class="t" style="left:119.38px;top:90.11px;font-size:30px;line-height:30px;color:#f1f1f1;transform:scaleX(0.9600)">Edit</div><div class="t" style="left:219.00px;top:90.11px;font-size:30px;line-height:30px;color:#f1f1f1;transform:scaleX(0.9692)">View</div><div class="t" style="left:331.02px;top:90.11px;font-size:30px;line-height:30px;color:#f1f1f1;transform:scaleX(0.9891)">Project</div><div class="t" style="left:472.00px;top:90.11px;font-size:30px;line-height:30px;color:#f1f1f1;transform:scaleX(1.0000)">Build</div><div class="t" style="left:587.24px;top:90.11px;font-size:30px;line-height:30px;color:#f1f1f1;transform:scaleX(1.0294)">Debug</div><div class="t" style="left:727.50px;top:90.11px;font-size:30px;line-height:30px;color:#f1f1f1;transform:scaleX(0.9514)">Team</div><div class="t" style="left:845.44px;top:90.11px;font-size:30px;line-height:30px;color:#f1f1f1;transform:scaleX(1.0277)">Nsight</div><div class="t" style="left:982.70px;top:90.11px;font-size:30px;line-height:30px;color:#f1f1f1;transform:scaleX(0.9754)">Tools</div><div class="t" style="left:1100.70px;top:90.11px;font-size:30px;line-height:30px;color:#f1f1f1;transform:scaleX(0.9309)">Test</div><div class="t" style="left:1201.50px;top:90.11px;font-size:30px;line-height:30px;color:#f1f1f1;transform:scaleX(0.9604)">Analyze</div><div class="t" style="left:1353.50px;top:90.11px;font-size:30px;line-height:30px;color:#f1f1f1;transform:scaleX(1.0215)">Window</div><div class="t" style="left:1511.48px;top:90.11px;font-size:30px;line-height:30px;color:#f1f1f1;transform:scaleX(1.0119)">Help</div><div class="t" style="left:1984.50px;top:94.61px;font-size:30px;line-height:30px;color:#f1f1f1;transform:scaleX(0.9508)">Big Bryce</div><div class="t" style="left:2165.15px;top:88.77px;font-size:33px;line-height:33px;color:#ffffff;transform:scaleX(0.9268)">BB</div><div class="t" style="left:1482.05px;top:20.96px;font-size:31px;line-height:31px;color:#999999;transform:scaleX(0.9495)">Quick Launch (Ctrl+Q)</div><div class="t" style="left:681.24px;top:151.50px;font-size:30px;line-height:30px;color:#f1f1f1;transform:scaleX(1.0318)">Debug</div><div class="t" style="left:859.50px;top:151.50px;font-size:30px;line-height:30px;color:#f1f1f1;transform:scaleX(0.9369)">Any CPU</div><div class="t" style="left:1190.70px;top:151.60px;font-size:30px;line-height:30px;color:#f1f1f1;transform:scaleX(1.0133)">Attach to Unity</div><div class="t" style="left:89.10px;top:229.60px;font-size:30px;line-height:30px;color:#ffffff;transform:scaleX(0.9479)">UITabPager.cs</div><div class="t" style="left:399.95px;top:229.10px;font-size:30px;line-height:30px;color:#f1f1f1;transform:scaleX(0.9751)">UITabButton.cs</div><div class="t" style="left:727.13px;top:229.10px;font-size:30px;line-height:30px;color:#f1f1f1;transform:scaleX(0.9346)">UITabSet.cs</div><div class="t" style="left:135.00px;top:284.11px;font-size:30px;line-height:30px;color:#f1f1f1;transform:scaleX(0.9668)">Assembly-CSharp</div><div class="t" style="left:817.57px;top:283.21px;font-size:30px;line-height:30px;color:#999999;transform:scaleX(0.9662)">Demo2020.UITabPager</div><div class="t" style="left:1501.51px;top:283.31px;font-size:30px;line-height:30px;color:#999999;transform:scaleX(0.9891)">defaultTab</div><div class="t" style="left:86.88px;top:1743.80px;font-size:28px;line-height:28px;color:#f1f1f1;transform:scaleX(1.0091)">100 %</div><div class="t" style="left:71.05px;top:1812.61px;font-size:30px;line-height:30px;color:#ffffff;transform:scaleX(0.9271)">Ready</div><div class="t" style="left:284.95px;top:1812.61px;font-size:30px;line-height:30px;color:#ffffff;transform:scaleX(0.9268)">Ln 5</div><div class="t" style="left:515.28px;top:1812.61px;font-size:30px;line-height:30px;color:#ffffff;transform:scaleX(0.9235)">Col 1</div><div class="t" style="left:745.40px;top:1812.61px;font-size:30px;line-height:30px;color:#ffffff;transform:scaleX(0.9049)">Ch 1</div><div class="t" style="left:1085.59px;top:1812.61px;font-size:30px;line-height:30px;color:#ffffff;transform:scaleX(0.9064)">INS</div><div class="t" style="left:1817.60px;top:1812.11px;font-size:30px;line-height:30px;color:#ffffff;transform:scaleX(1.0014)">Add to Source Control</div><div class="t" style="left:57.04px;top:214.30px;font-size:31px;line-height:31px;color:#d8d8d8;transform-origin:0 0;transform:rotate(90deg) scaleX(0.9860)">Toolbox</div><div style="position:absolute;left:2144px;top:343px;width:69px;height:50px;overflow:hidden"><div class="t" style="left:9.80px;top:12.00px;font-size:30px;line-height:30px;color:#999999;transform:scaleX(0.9)">Search Solution</div></div>
</body></html>
